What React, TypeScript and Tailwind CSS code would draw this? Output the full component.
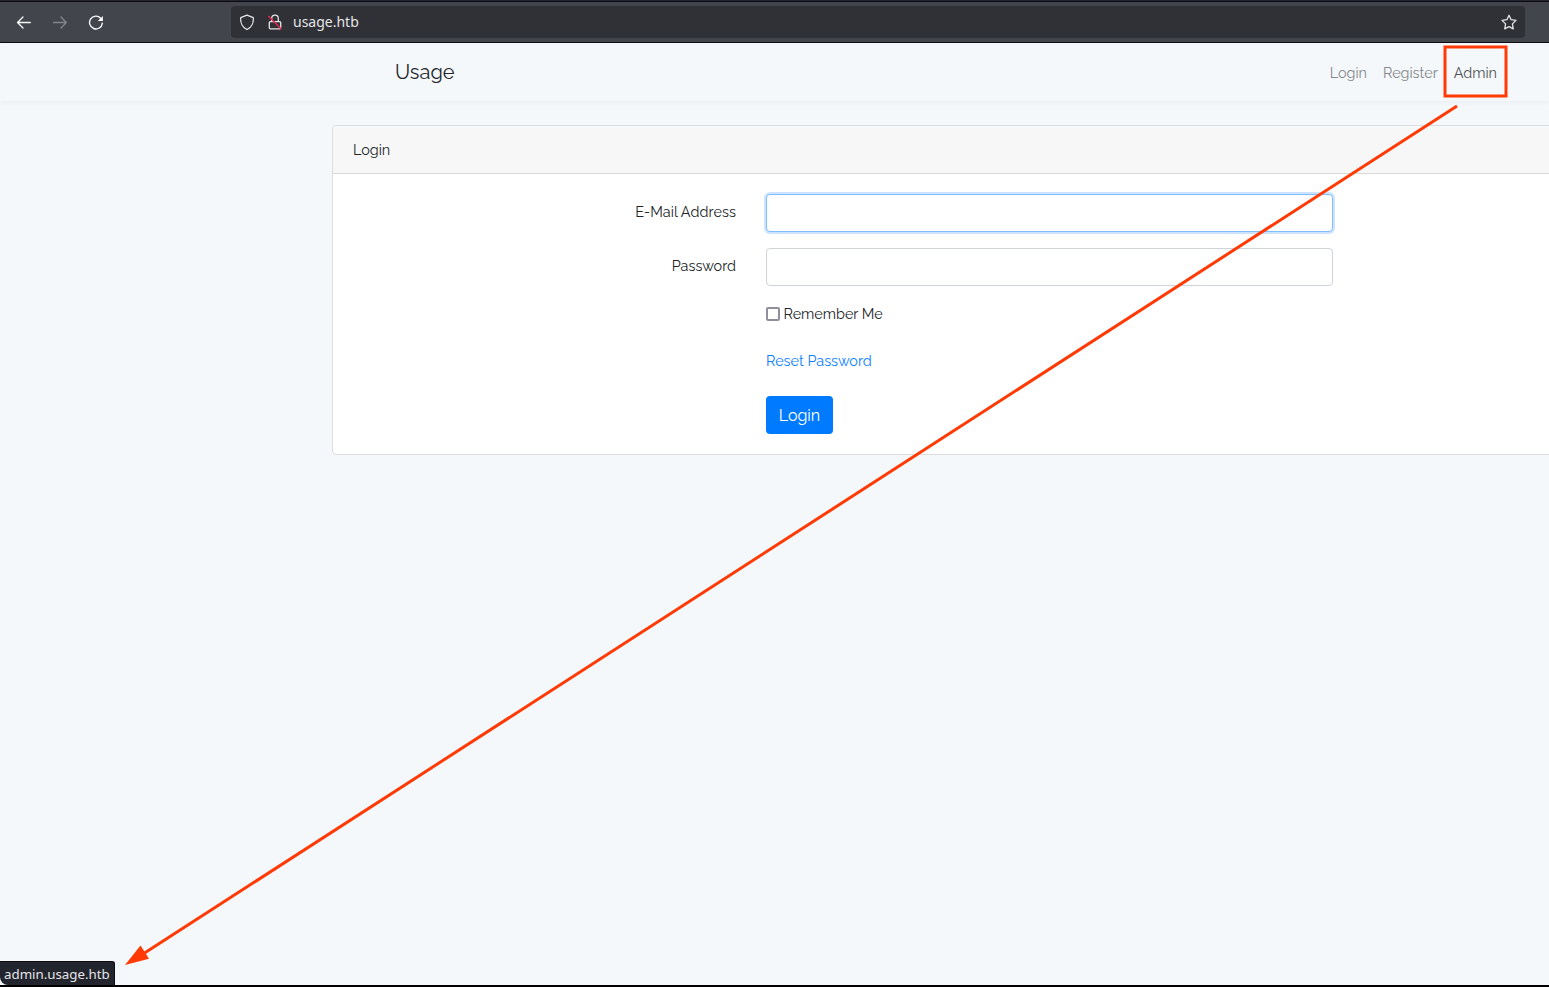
function BrowserBar() {
  return (
    <header className="flex h-[43px] flex-col border-b border-[#0c0c12] bg-[#42454c] font-['Noto_Sans',sans-serif]">
      <div className="h-px bg-[#23252e]" />
      <div className="h-px bg-[#0c0c12]" />
      <div className="flex flex-1 items-center pr-6">
        <div className="flex w-[231px] gap-5 pl-4 text-[#fbfbfe]">
          <svg className="size-4" viewBox="0 0 16 16" fill="none" stroke="currentColor" strokeWidth="1.3" strokeLinecap="round" strokeLinejoin="round">
            <path d="M14.3 8.5H1.5M7 3L1.5 8.5 7 14" />
          </svg>
          <svg className="size-4 text-[#85868b]" viewBox="0 0 16 16" fill="none" stroke="currentColor" strokeWidth="1.3" strokeLinecap="round" strokeLinejoin="round">
            <path d="M1.5 8.5h12.8M9 3l5.3 5.500L9 14" />
          </svg>
          <svg className="size-4" viewBox="0 0 16 16" fill="none" stroke="currentColor" strokeWidth="1.4" strokeLinecap="round">
            <path d="M12.7 4.200A6.400 6.400 0 1 0 14.300 9.300" />
            <path d="M14.900 1.900V7h-5.100z" fill="currentColor" stroke="none" />
          </svg>
        </div>
        <div className="flex h-8 flex-1 items-center rounded bg-[#303136] px-2 text-[#e4e4e7]">
          <svg className="size-4" viewBox="0 0 16 16" fill="none" stroke="currentColor" strokeWidth="1.3" strokeLinejoin="round">
            <path d="M8 1.100L14.300 3.700C14.700 8.600 12.500 13.600 8 15.500C3.500 13.600 1.300 8.600 1.700 3.700Z" />
          </svg>
          <svg className="ml-3 size-4" viewBox="0 0 16 16" fill="none" stroke="currentColor" strokeWidth="1.3" strokeLinejoin="round">
            <path d="M4.700 7.500V4.500a3.300 3.300 0 0 1 6.600 0v3M3.300 7.600h9.400q1 0 1 1v5.200q0 1-1 1H3.300q-1 0-1-1V8.600q0-1 1-1z" />
            <path d="M1.300 2l13.200 13.200" stroke="#e22850" strokeWidth="1.500" />
          </svg>
          <span className="ml-[10px] flex-1 text-[14px] leading-5">usage.htb</span>
          <svg className="size-4" viewBox="0 0 16 16" fill="none" stroke="currentColor" strokeWidth="1.3" strokeLinejoin="round">
            <path d="M8 1.300l2.100 4.400 4.900.7-3.600 3.500.9 5L8 12.600l-4.300 2.300.9-5L1 6.400l4.900-.7z" />
          </svg>
        </div>
      </div>
    </header>
  );
}

function Navbar() {
  return (
    <nav className="flex h-[58px] items-center pr-[52px] pl-[395px] shadow-[0_2px_4px_rgba(0,0,0,.04)]">
      <a className="text-[20px] leading-[30px] text-[#212529]">Usage</a>
      <div className="ml-auto flex gap-4 text-[14.4px] leading-[23px] text-[#858789]">
        <a>Login</a>
        <a>Register</a>
        <a className="text-[#4f5153]">Admin</a>
      </div>
    </nav>
  );
}

function LoginCard() {
  return (
    <main className="mt-6 ml-[332px] w-[1300px] shrink-0 rounded border border-[#dbdee1] bg-white">
      <div className="flex h-12 items-center rounded-t border-b border-[#d8d9da] bg-[#f7f7f7] px-5">Login</div>
      <form className="grid grid-cols-[403px_567px] gap-x-[30px] gap-y-4 pt-5 pb-5">
        <label className="pt-[6px] text-right tracking-[0.08px]">E-Mail Address</label>
        <input className="h-[38px] rounded border border-[#80bdff] bg-white px-3 shadow-[0_0_0_2px_#cce4ff] outline-none" type="email" />
        <label className="pt-[6px] text-right">Password</label>
        <input className="h-[38px] rounded border border-[#ced4da] bg-white px-3 outline-none" type="password" />
        <label className="col-start-2 flex h-[23px] items-center gap-[3.5px]">
          <input className="size-[14px] appearance-none rounded-[2px] border-2 border-[#8f8f9d] bg-white" type="checkbox" />
          Remember Me
        </label>
        <a className="col-start-2 mt-2 h-[23px] text-[#0b80ff]">Reset Password</a>
        <button className="col-start-2 mt-2 h-[38px] w-[67px] rounded bg-[#007bff] text-[16px] text-white" type="button">Login</button>
      </form>
    </main>
  );
}

export default function App() {
  return (
    <div className="relative flex h-[987px] w-[1549px] flex-col overflow-hidden border-b-2 border-black bg-[#f5f8fb] font-[Raleway,Lato,sans-serif] text-[14.4px] leading-[23px] text-[#212529]">
      <BrowserBar />
      <Navbar />
      <LoginCard />
      <div className="absolute bottom-0 left-0 flex h-6 w-[115px] items-center rounded-tr-[3px] rounded-bl-[8px] border-t border-r border-[#0c0c12] bg-[#23252e] pt-[2px] pl-1 font-['Noto_Sans',sans-serif] text-[13.3px] text-[#e4e4e7]">admin.usage.htb</div>
      <svg className="pointer-events-none absolute inset-0" width="1549" height="987" viewBox="0 0 1549 987" fill="none" stroke="#ff3a05" strokeWidth="3">
        <path d="M1445 47h61v49h-61zM1457 106L143 954" />
        <path d="M125 965L140.500 945.500L149 958.700Z" fill="#ff3a05" stroke="none" />
      </svg>
    </div>
  );
}
